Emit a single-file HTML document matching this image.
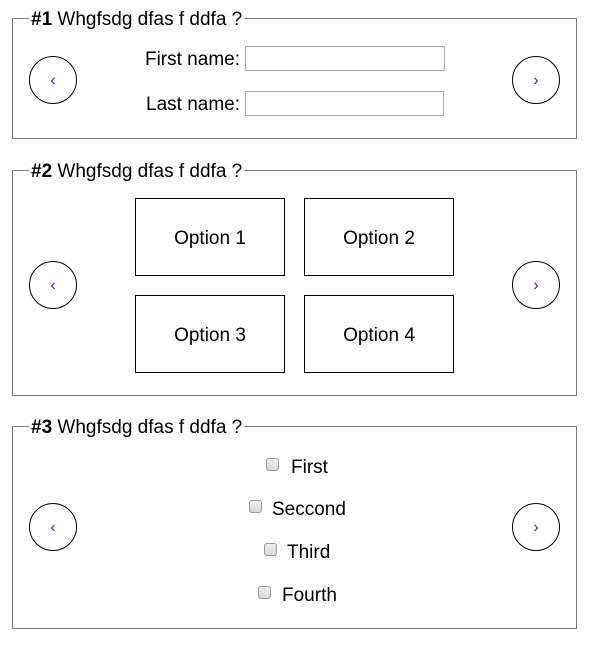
<!DOCTYPE html>
<html><head><style>
body{margin:0;width:590px;height:649px;background:#fff;font-family:"Liberation Sans",Arial,sans-serif;color:#000;position:relative;overflow:hidden}
.fs{position:absolute;border:1px solid #7a7a7a;box-sizing:border-box}
.lg{position:absolute;background:#fff;font-size:19px;padding:0 2px;line-height:20px}
.c{position:absolute;width:48px;height:48px;border:1px solid #000;border-radius:50%;box-sizing:border-box;text-align:center;line-height:48px;font-size:16px;color:#4b1a8a}
.in{position:absolute;border:1px solid #a9a9a9;box-sizing:border-box;height:25px}
.lb{position:absolute;font-size:19px;line-height:20px;text-align:right;width:200px}
.op{position:absolute;width:150px;height:78px;border:1px solid #000;box-sizing:border-box;text-align:center;line-height:80px;font-size:19px}
.cb{position:absolute;width:13px;height:13px;border:1px solid #999;border-radius:3px;box-sizing:border-box;background:linear-gradient(#f0f0f0,#d8d8d8)}
.t{position:absolute;font-size:19px;line-height:20px}
</style></head><body>
<div class="fs" style="left:12px;top:18px;width:565px;height:121px"></div>
<div class="lg" style="left:29px;top:10px"><b>#1</b> Whgfsdg dfas f ddfa ?</div>
<div class="c" style="left:29px;top:56px">‹</div>
<div class="c" style="left:512px;top:56px">›</div>
<div class="lb" style="left:40px;top:50px">First name:</div>
<div class="in" style="left:245px;top:46px;width:200px"></div>
<div class="lb" style="left:40px;top:95px">Last name:</div>
<div class="in" style="left:245px;top:91px;width:199px"></div>

<div class="fs" style="left:12px;top:170px;width:565px;height:226px"></div>
<div class="lg" style="left:29px;top:162px"><b>#2</b> Whgfsdg dfas f ddfa ?</div>
<div class="c" style="left:29px;top:261px">‹</div>
<div class="c" style="left:512px;top:261px">›</div>
<div class="op" style="left:135px;top:198px">Option 1</div>
<div class="op" style="left:304px;top:198px">Option 2</div>
<div class="op" style="left:135px;top:295px">Option 3</div>
<div class="op" style="left:304px;top:295px">Option 4</div>

<div class="fs" style="left:12px;top:426px;width:565px;height:203px"></div>
<div class="lg" style="left:29px;top:418px"><b>#3</b> Whgfsdg dfas f ddfa ?</div>
<div class="c" style="left:29px;top:503px">‹</div>
<div class="c" style="left:512px;top:503px">›</div>
<div class="cb" style="left:266px;top:458px"></div><div class="t" style="left:291px;top:458px">First</div>
<div class="cb" style="left:249px;top:500px"></div><div class="t" style="left:272px;top:500px">Seccond</div>
<div class="cb" style="left:264px;top:543px"></div><div class="t" style="left:287px;top:543px">Third</div>
<div class="cb" style="left:258px;top:586px"></div><div class="t" style="left:282px;top:586px">Fourth</div>
</body></html>
